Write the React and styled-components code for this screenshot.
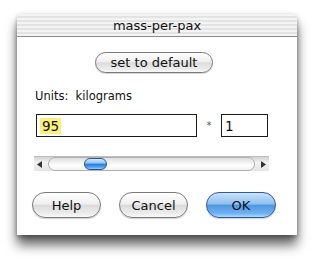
import React from 'react';
import styled, { createGlobalStyle } from 'styled-components';

const Global = createGlobalStyle`
  html, body {
    margin: 0;
    background: #fff;
  }
  body {
    font-family: "DejaVu Sans", "Liberation Sans", sans-serif;
  }
`;

const Page = styled.div`
  width: 312px;
  height: 260px;
  padding: 14px 0 0 17px;
  box-sizing: border-box;
  overflow: hidden;
`;

const Window = styled.div`
  width: 280px;
  height: 221px;
  background: #fff;
  border-radius: 5px 5px 0 0;
  box-shadow: 0 10px 12px rgba(0, 0, 0, 0.6), 0 2px 5px rgba(0, 0, 0, 0.35);
  display: flex;
  flex-direction: column;
`;

const TitleBar = styled.div`
  height: 22px;
  border-radius: 5px 5px 0 0;
  border-bottom: 1px solid #8c8c8c;
  background: repeating-linear-gradient(
    to bottom,
    #f4f4f4 0px,
    #f4f4f4 2px,
    #e3e3e3 2px,
    #e3e3e3 4px
  );
  display: flex;
  align-items: center;
  justify-content: center;
  font-size: 13px;
  color: #111;
`;

const Body = styled.div`
  flex: 1;
  display: flex;
  flex-direction: column;
  padding: 15px 15px 0 15px;
`;

const Pill = styled.button`
  height: ${(p) => (p.$small ? 21 : 26)}px;
  width: ${(p) => p.$w}px;
  border-radius: 13px;
  border: 1px solid ${(p) => (p.$primary ? '#34589a' : '#7a7a7a')};
  background: ${(p) =>
    p.$primary
      ? 'linear-gradient(to bottom, #c8e2fb 0%, #8fc0ef 45%, #4f97e3 52%, #6fb2f2 85%, #a9dcff 100%)'
      : 'linear-gradient(to bottom, #fefefe 0%, #f0f0f0 45%, #dcdcdc 52%, #ececec 85%, #fafafa 100%)'};
  box-shadow: 0 1px 1px rgba(0, 0, 0, 0.18);
  font-family: "DejaVu Sans", sans-serif;
  font-size: 13px;
  color: #111;
  padding: 0;
  display: flex;
  align-items: center;
  justify-content: center;
`;

const TopRow = styled.div`
  display: flex;
  justify-content: center;
  padding-right: 6px;
`;

const Label = styled.div`
  margin: 16px 0 0 3px;
  font-size: 11.5px;
  line-height: 14px;
  color: #111;
  white-space: pre;
`;

const FieldRow = styled.div`
  display: flex;
  align-items: center;
  margin: 11px 0 0 4px;
`;

const Field = styled.div`
  width: ${(p) => p.$w}px;
  height: 23px;
  box-sizing: border-box;
  border: 1px solid #1a1a1a;
  display: flex;
  align-items: center;
  padding-left: 3px;
  font-size: 13.5px;
  color: #111;
`;

const Selected = styled.span`
  background: #fbf07a;
  padding: 0 2px;
  line-height: 16px;
`;

const Star = styled.span`
  width: 24px;
  text-align: center;
  font-size: 10px;
  color: #555;
`;

const Scroll = styled.div`
  margin: 19px 0 0 2px;
  width: 235px;
  height: 15px;
  display: flex;
  align-items: center;
  background: linear-gradient(to bottom, #d2d2d2, #f2f2f2 40%, #e4e4e4);
  border-top: 1px solid #bcbcbc;
  box-sizing: border-box;
`;

const Arrow = styled.div`
  width: 12px;
  height: 14px;
  display: flex;
  align-items: center;
  justify-content: center;
`;

const Track = styled.div`
  flex: 1;
  height: 14px;
  margin: 0 2px;
  border-radius: 7px;
  border: 1px solid #b0b0b0;
  box-sizing: border-box;
  background: linear-gradient(to bottom, #dedede, #ffffff 60%, #f2f2f2);
  position: relative;
`;

const Thumb = styled.div`
  position: absolute;
  left: 35px;
  top: 0px;
  width: 23px;
  height: 12px;
  border-radius: 6px;
  border: 1px solid #2a5796;
  box-sizing: border-box;
  background: linear-gradient(to bottom, #d4ebfd 0%, #8ec3f0 40%, #2f7fd9 55%, #4f9fee 80%, #8fd0ff 100%);
`;

const ButtonRow = styled.div`
  display: flex;
  gap: 18px;
  margin-top: 21px;
`;

const App = () => (
  <>
    <Global />
    <Page>
      <Window>
        <TitleBar>mass-per-pax</TitleBar>
        <Body>
          <TopRow>
            <Pill $small $w={118}>set to default</Pill>
          </TopRow>
          <Label>{'Units:  kilograms'}</Label>
          <FieldRow>
            <Field $w={161}>
              <Selected>95</Selected>
            </Field>
            <Star>*</Star>
            <Field $w={47}>1</Field>
          </FieldRow>
          <Scroll>
            <Arrow>
              <svg width="6" height="7" viewBox="0 0 6 7"><path d="M5 0 L0 3.5 L5 7 Z" fill="#333" /></svg>
            </Arrow>
            <Track>
              <Thumb />
            </Track>
            <Arrow>
              <svg width="6" height="7" viewBox="0 0 6 7"><path d="M1 0 L6 3.5 L1 7 Z" fill="#333" /></svg>
            </Arrow>
          </Scroll>
          <ButtonRow>
            <Pill $w={69}>Help</Pill>
            <Pill $w={69}>Cancel</Pill>
            <Pill $primary $w={70}>OK</Pill>
          </ButtonRow>
        </Body>
      </Window>
    </Page>
  </>
);

export default App;
